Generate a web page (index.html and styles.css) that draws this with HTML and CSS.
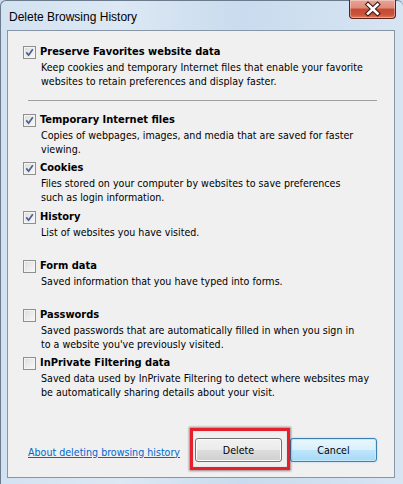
FILE: index.html
```html
<!DOCTYPE html>
<html>
<head>
<meta charset="utf-8">
<link rel="stylesheet" href="styles.css">
</head>
<body>
<div class="window">
  <div class="titlebar">
    <span class="title">Delete Browsing History</span>
    <div class="close">
      <svg width="47" height="20" viewBox="0 0 47 20">
        <path d="M19 5.5 L28.5 14.5 M28.5 5.5 L19 14.5" stroke="#3b1610" stroke-width="4.6" stroke-linecap="square"/>
        <path d="M19 5.5 L28.5 14.5 M28.5 5.5 L19 14.5" stroke="#ffffff" stroke-width="2.6" stroke-linecap="square"/>
      </svg>
    </div>
  </div>
  <div class="panel">
    <div class="items">
      <div class="item first">
        <span class="cb checked"><svg width="13" height="13" viewBox="0 0 13 13"><path d="M3.3 6.4 L5.6 9.2 L9.8 3.2" fill="none" stroke="#4a5f8f" stroke-width="1.7"/></svg></span>
        <div class="text">
          <div class="name">Preserve Favorites website data</div>
          <div class="desc">Keep cookies and temporary Internet files that enable your favorite<br>websites to retain preferences and display faster.</div>
        </div>
      </div>
      <div class="sep"></div>
      <div class="item">
        <span class="cb checked"><svg width="13" height="13" viewBox="0 0 13 13"><path d="M3.3 6.4 L5.6 9.2 L9.8 3.2" fill="none" stroke="#4a5f8f" stroke-width="1.7"/></svg></span>
        <div class="text">
          <div class="name">Temporary Internet files</div>
          <div class="desc">Copies of webpages, images, and media that are saved for faster<br>viewing.</div>
        </div>
      </div>
      <div class="item">
        <span class="cb checked"><svg width="13" height="13" viewBox="0 0 13 13"><path d="M3.3 6.4 L5.6 9.2 L9.8 3.2" fill="none" stroke="#4a5f8f" stroke-width="1.7"/></svg></span>
        <div class="text">
          <div class="name">Cookies</div>
          <div class="desc">Files stored on your computer by websites to save preferences<br>such as login information.</div>
        </div>
      </div>
      <div class="item">
        <span class="cb checked"><svg width="13" height="13" viewBox="0 0 13 13"><path d="M3.3 6.4 L5.6 9.2 L9.8 3.2" fill="none" stroke="#4a5f8f" stroke-width="1.7"/></svg></span>
        <div class="text">
          <div class="name">History</div>
          <div class="desc">List of websites you have visited.</div>
        </div>
      </div>
      <div class="item">
        <span class="cb"></span>
        <div class="text">
          <div class="name">Form data</div>
          <div class="desc">Saved information that you have typed into forms.</div>
        </div>
      </div>
      <div class="item">
        <span class="cb"></span>
        <div class="text">
          <div class="name">Passwords</div>
          <div class="desc">Saved passwords that are automatically filled in when you sign in<br>to a website you've previously visited.</div>
        </div>
      </div>
      <div class="item">
        <span class="cb"></span>
        <div class="text">
          <div class="name">InPrivate Filtering data</div>
          <div class="desc">Saved data used by InPrivate Filtering to detect where websites may<br>be automatically sharing details about your visit.</div>
        </div>
      </div>
    </div>
    <div class="footer">
      <a class="link" href="#">About deleting browsing history</a>
      <div class="buttons">
        <span class="highlight"><button class="btn">Delete</button></span>
        <button class="btn focused">Cancel</button>
      </div>
    </div>
  </div>
</div>
</body>
</html>
```
FILE: styles.css
```css
html, body {
  margin: 0;
  padding: 0;
  background: #cbdcee;
}
.window {
  width: 403px;
  height: 484px;
  box-sizing: border-box;
  background: linear-gradient(to right, #d3e2f1 0%, #dce8f4 30%, #c9dbee 60%, #d7e5f3 100%);
  border-left: 1px solid #6a7b8e;
  border-top: 1px solid #6a7b8e;
  border-radius: 6px 6px 0 0;
  display: flex;
  flex-direction: column;
  font-family: "DejaVu Sans Condensed", "DejaVu Sans", sans-serif;
  color: #000;
}
.titlebar {
  height: 29px;
  display: flex;
  justify-content: space-between;
  align-items: flex-start;
}
.title {
  font-family: "Liberation Sans", Arial, sans-serif;
  font-size: 12px;
  margin: 9px 0 0 8px;
  color: #000;
}
.close {
  width: 45px;
  height: 18px;
  margin-right: 7px;
  margin-top: -1px;
  border: 1px solid #5e2218;
  border-top: none;
  border-radius: 0 0 4px 4px;
  background: linear-gradient(to bottom, #e8a597 0%, #dc8a79 45%, #c74a31 50%, #c9513a 80%, #de7b5f 100%);
  box-shadow: inset 0 0 0 1px rgba(255,255,255,0.35);
  overflow: hidden;
}
.close svg {
  display: block;
  margin: -1px 0 0 -1px;
}
.panel {
  margin: 0 8px 6px 6px;
  flex: 1;
  background: #f0f0f0;
  border: 1px solid #8796a7;
  display: flex;
  flex-direction: column;
}
.items {
  padding: 13px 17px 0 15px;
}
.item {
  display: flex;
  align-items: flex-start;
  gap: 4px;
  height: 45px;
  margin-bottom: 3.8px;
}
.item.first {
  margin-bottom: 0;
}
.cb {
  flex: none;
  width: 11px;
  height: 11px;
  margin-top: 2px;
  border: 1px solid #8e8f8f;
  background: linear-gradient(135deg, #dcdcdc 0%, #eeeeee 60%, #f8f8f8 100%);
  box-shadow: inset 0 0 0 1px #f4f4f4;
  position: relative;
}
.cb svg {
  position: absolute;
  left: -1px;
  top: -1px;
}
.text {
  flex: 1;
}
.name {
  font-weight: bold;
  font-size: 11px;
  line-height: 17px;
  margin-top: -1px;
}
.desc {
  font-size: 10.6px;
  line-height: 14px;
  padding-left: 1px;
  white-space: nowrap;
}
.sep {
  height: 1px;
  background: #a0a0a0;
  margin: 11px 0 10.5px 5px;
}
.footer {
  margin-top: auto;
  display: flex;
  align-items: center;
  justify-content: space-between;
  padding: 0 17px 15px 20px;
}
.link {
  font-size: 10.6px;
  color: #0066cc;
  text-decoration: underline;
  margin-top: 3px;
}
.buttons {
  display: flex;
  gap: 8px;
}
.highlight {
  position: relative;
  display: flex;
}
.highlight::after {
  content: "";
  position: absolute;
  left: -5px;
  top: -10px;
  right: -8px;
  bottom: -8px;
  border: 3px solid #e3202c;
  box-shadow: 0 0 2px 1px rgba(60,0,0,0.45), inset 0 0 1px rgba(60,0,0,0.4);
}
.btn {
  width: 87px;
  height: 24px;
  font-family: "DejaVu Sans Condensed", "DejaVu Sans", sans-serif;
  font-size: 10.6px;
  color: #000;
  border: 1px solid #707070;
  border-radius: 3px;
  background: linear-gradient(to bottom, #f2f2f2 0%, #ebebeb 50%, #dddddd 50%, #cfcfcf 100%);
  box-shadow: inset 0 0 0 1px #fcfcfc;
  padding: 0;
}
.btn.focused {
  border-color: #3c7fb1;
  background: linear-gradient(to bottom, #eaf6fd 0%, #d9f0fc 50%, #bee6fd 50%, #a7d9f5 100%);
  box-shadow: inset 0 0 0 1px #c4e8fc, 0 0 2px #9fd2f2;
}
```
